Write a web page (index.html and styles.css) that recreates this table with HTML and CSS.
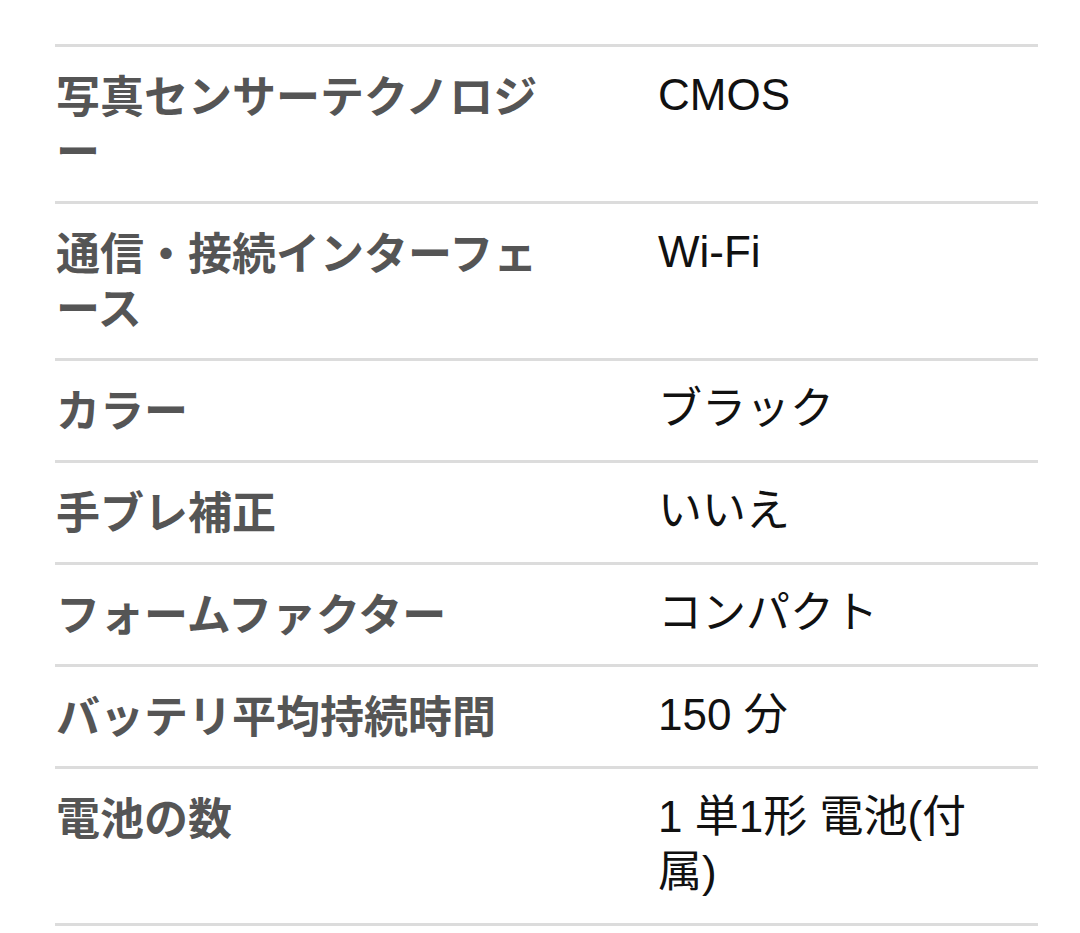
FILE: index.html
```html
<!DOCTYPE html>
<html lang="ja">
<head>
<meta charset="utf-8">
<link rel="stylesheet" href="styles.css">
</head>
<body>
<div class="specs">
  <div class="row"><div class="key">写真センサーテクノロジー</div><div class="val">CMOS</div></div>
  <div class="row"><div class="key">通信・接続インターフェース</div><div class="val">Wi-Fi</div></div>
  <div class="row"><div class="key">カラー</div><div class="val">ブラック</div></div>
  <div class="row"><div class="key">手ブレ補正</div><div class="val">いいえ</div></div>
  <div class="row"><div class="key">フォームファクター</div><div class="val">コンパクト</div></div>
  <div class="row"><div class="key">バッテリ平均持続時間</div><div class="val">150 分</div></div>
  <div class="row"><div class="key">電池の数</div><div class="val">1 単1形 電池(付属)</div></div>
</div>
</body>
</html>
```
FILE: styles.css
```css
html, body {
  margin: 0;
  padding: 0;
  background: #fff;
}
body {
  padding: 44px 42px 0 55px;
}
.specs {
  width: 983px;
  border-top: 3px solid #dcdcdc;
}
.row {
  display: grid;
  grid-template-columns: 601px 1fr;
  border-bottom: 3px solid #dcdcdc;
  padding: 20px 0 24px;
  line-height: 55px;
}
.key {
  font-family: "Noto Sans CJK JP", sans-serif;
  font-weight: 700;
  font-size: 44px;
  color: #555;
  padding-right: 101px;
  padding-left: 1px;
}
.val {
  font-family: "Liberation Sans", "Noto Sans CJK JP", sans-serif;
  font-size: 44px;
  color: #111;
  padding-right: 40px;
  padding-left: 2px;
}
```
